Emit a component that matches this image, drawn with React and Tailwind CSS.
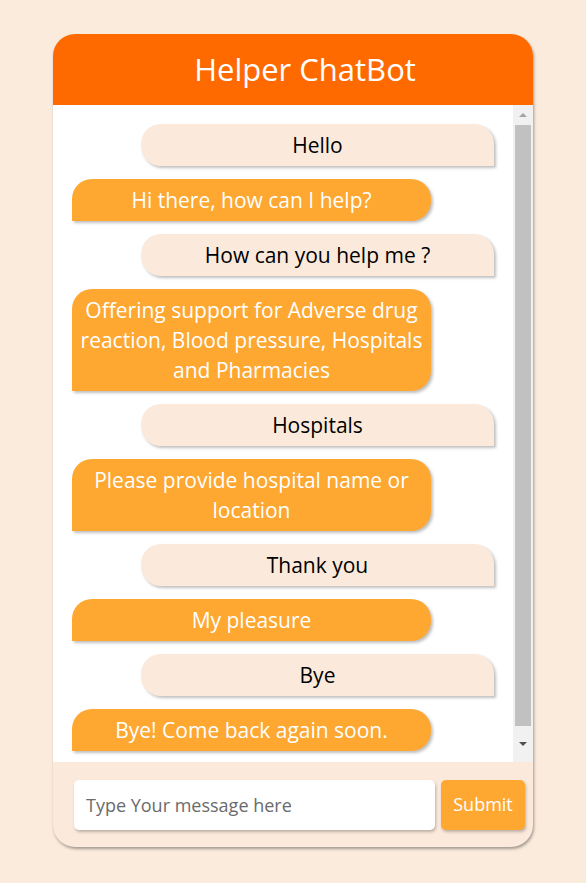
import React from 'react'

const messages = [
  { from: 'user', text: 'Hello' },
  { from: 'bot', text: 'Hi there, how can I help?' },
  { from: 'user', text: 'How can you help me ?' },
  { from: 'bot', text: 'Offering support for Adverse drug reaction, Blood pressure, Hospitals and Pharmacies' },
  { from: 'user', text: 'Hospitals' },
  { from: 'bot', text: 'Please provide hospital name or location' },
  { from: 'user', text: 'Thank you' },
  { from: 'bot', text: 'My pleasure' },
  { from: 'user', text: 'Bye' },
  { from: 'bot', text: 'Bye! Come back again soon.' },
]

const Bubble = ({ from, text }) =>
  from === 'user' ? (
    <div className="self-end w-[353px] shrink-0 rounded-t-[20px] rounded-bl-[20px] bg-[#fbeadb] px-3 py-[6px] text-center text-[21px] leading-[30px] text-black shadow-[2px_2px_3px_rgba(0,0,0,0.25)]">
      {text}
    </div>
  ) : (
    <div className="self-start w-[359px] shrink-0 rounded-tl-[20px] rounded-r-[20px] bg-[#fea731] px-2 py-[6px] text-center text-[21px] leading-[30px] text-white shadow-[2px_2px_3px_rgba(0,0,0,0.25)]">
      {text}
    </div>
  )

export default function App() {
  return (
    <div className="min-h-screen w-full bg-[#fbebdd] pt-[34px] font-['Open_Sans',sans-serif]">
      <div className="ml-[53px] w-[480px] h-[813px] flex flex-col overflow-hidden rounded-[22px] bg-[#fbeadb] shadow-[1px_2px_3px_rgba(0,0,0,0.35)]">
        <header className="h-[71px] shrink-0 bg-[#ff6a00] flex items-center justify-center pl-6 text-white text-[31px]">
          Helper ChatBot
        </header>

        <div className="h-[657px] shrink-0 flex bg-white">
          <div className="flex-1 overflow-hidden flex flex-col gap-[13px] pt-[19px] px-[19px]">
            {messages.map((m, i) => (
              <Bubble key={i} {...m} />
            ))}
          </div>
          {/* scrollbar */}
          <div className="w-[20px] shrink-0 bg-[#f1f1f1] flex flex-col items-center">
            <div className="h-[20px] flex items-center justify-center">
              <div className="w-0 h-0 border-x-[4px] border-x-transparent border-b-[4px] border-b-[#a3a3a3]" />
            </div>
            <div className="w-[16px] h-[601px] bg-[#c1c1c1]" />
            <div className="flex-1 flex items-center justify-center">
              <div className="w-0 h-0 border-x-[4px] border-x-transparent border-t-[4px] border-t-[#505050]" />
            </div>
          </div>
        </div>

        <div className="flex-1 flex items-center gap-[6px] pl-[21px] pr-[8px]">
          <input
            type="text"
            placeholder="Type Your message here"
            className="w-[361px] h-[50px] rounded-[5px] bg-white px-3 text-[18px] text-black placeholder:text-[#6b6b6b] outline-none shadow-[1px_2px_3px_rgba(0,0,0,0.25)]"
          />
          <button className="w-[84px] h-[50px] rounded-[5px] bg-[#fea731] text-white text-[18px] shadow-[1px_2px_3px_rgba(0,0,0,0.25)]">
            Submit
          </button>
        </div>
      </div>
    </div>
  )
}
